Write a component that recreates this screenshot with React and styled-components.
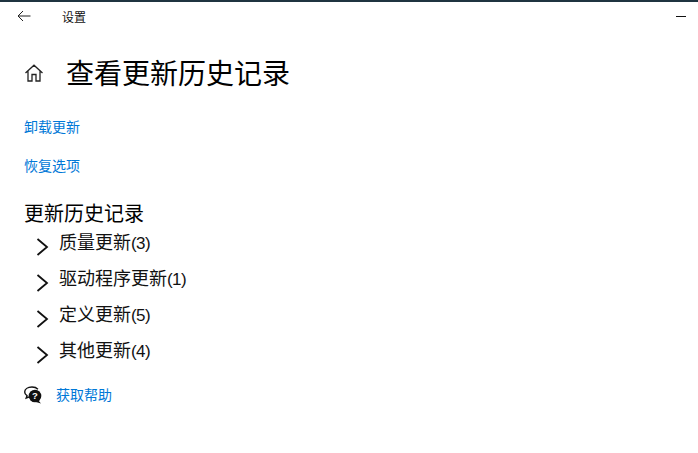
import styled, { createGlobalStyle } from "styled-components";

const GlobalStyle = createGlobalStyle`
  html, body {
    margin: 0;
    padding: 0;
    background: #fff;
  }
  body {
    font-family: "Roboto", "Noto Sans CJK SC", "Liberation Sans", sans-serif;
    color: #000;
  }
`;

const Page = styled.div`
  width: 698px;
  height: 453px;
  overflow: hidden;
  background: #fff;
  border-top: 2px solid #1f3440;
  box-sizing: border-box;
`;

const TitleBar = styled.div`
  display: flex;
  align-items: center;
  height: 30px;
  padding: 0 12px 0 17px;
`;

const BackButton = styled.div`
  display: flex;
  width: 45px;
  margin-top: -3px;
`;

const AppName = styled.span`
  margin-top: 2px;
  font-size: 12px;
  line-height: 30px;
  color: #111;
`;

const Minimize = styled.div`
  width: 10px;
  height: 1px;
  margin-left: auto;
  margin-top: -1px;
  background: #111;
`;

const Content = styled.main`
  display: flex;
  flex-direction: column;
  padding: 0 24px;
`;

const Header = styled.div`
  display: flex;
  align-items: center;
  gap: 22px;
  height: 46px;
  margin-top: 18px;
`;

const PageTitle = styled.h1`
  margin: 4px 0 0;
  font-size: 28px;
  font-weight: 400;
  line-height: 46px;
`;

const Link = styled.a`
  display: block;
  font-size: 14px;
  line-height: 20px;
  color: #0078d7;
`;

const Links = styled.div`
  display: flex;
  flex-direction: column;
  gap: 19px;
  margin-top: 21px;
`;

const SectionTitle = styled.h2`
  margin: 25px 0 0;
  font-size: 20px;
  font-weight: 400;
  line-height: 26px;
`;

const List = styled.ul`
  display: flex;
  flex-direction: column;
  gap: 8px;
  margin: 2px 0 0;
  padding: 0;
  list-style: none;
`;

const Row = styled.li`
  display: flex;
  align-items: center;
  height: 28px;
  font-size: 18px;
  line-height: 28px;
  color: #111;
`;

const Count = styled.span`
  font-family: "Liberation Sans", sans-serif;
  font-size: 17px;
  letter-spacing: -0.6px;
`;

const Chevron = styled.svg`
  width: 14px;
  height: 20px;
  margin: 7px 10px 0 11px;
  flex: none;
`;

const Help = styled.div`
  display: flex;
  align-items: center;
  gap: 14px;
  margin-top: 20px;
`;

const Expand = () => (
  <Chevron viewBox="0 0 14 20" fill="none" stroke="#111" strokeWidth="1.8">
    <path d="M2.5 2 L12 10 L2.5 18" />
  </Chevron>
);

const items = [
  { name: "质量更新", count: 3 },
  { name: "驱动程序更新", count: 1 },
  { name: "定义更新", count: 5 },
  { name: "其他更新", count: 4 },
];

export default function App() {
  return (
    <Page>
      <GlobalStyle />
      <TitleBar>
        <BackButton>
          <svg width="14" height="12" viewBox="0 0 14 12" fill="none" stroke="#222" strokeWidth="1">
            <path d="M13.5 6 H1 M6 1 L1 6 L6 11" />
          </svg>
        </BackButton>
        <AppName>设置</AppName>
        <Minimize />
      </TitleBar>
      <Content>
        <Header>
          <svg width="20" height="18" viewBox="0 0 20 18" fill="none" stroke="#222" strokeWidth="1.3">
            <path d="M1.5 9 L10 1.2 L18.5 9 M4 7 V17 H8 V10.5 H12 V17 H16 V7" />
          </svg>
          <PageTitle>查看更新历史记录</PageTitle>
        </Header>
        <Links>
          <Link>卸载更新</Link>
          <Link>恢复选项</Link>
        </Links>
        <SectionTitle>更新历史记录</SectionTitle>
        <List>
          {items.map((item) => (
            <Row key={item.name}>
              <Expand />
              <span>
                {item.name}
                <Count>({item.count})</Count>
              </span>
            </Row>
          ))}
        </List>
        <Help>
          <svg width="18" height="18" viewBox="0 0 18 18">
            <path d="M8 1 C3.6 1 0.7 3.2 0.7 6 C0.7 7.6 1.6 8.9 3 9.7 L2.2 12 L5.4 10.8" fill="none" stroke="#111" strokeWidth="1.4" />
            <path d="M8 1 C10.5 1 12.6 1.8 13.9 3.2" fill="none" stroke="#111" strokeWidth="1.4" />
            <circle cx="11" cy="10" r="6.3" fill="#111" />
            <path d="M14 14 L17 17.5 L11 15.8 Z" fill="#111" />
            <text x="11" y="13.2" fontSize="9.5" fontWeight="700" textAnchor="middle" fill="#fff" fontFamily="Liberation Sans, sans-serif">?</text>
          </svg>
          <Link>获取帮助</Link>
        </Help>
      </Content>
    </Page>
  );
}
